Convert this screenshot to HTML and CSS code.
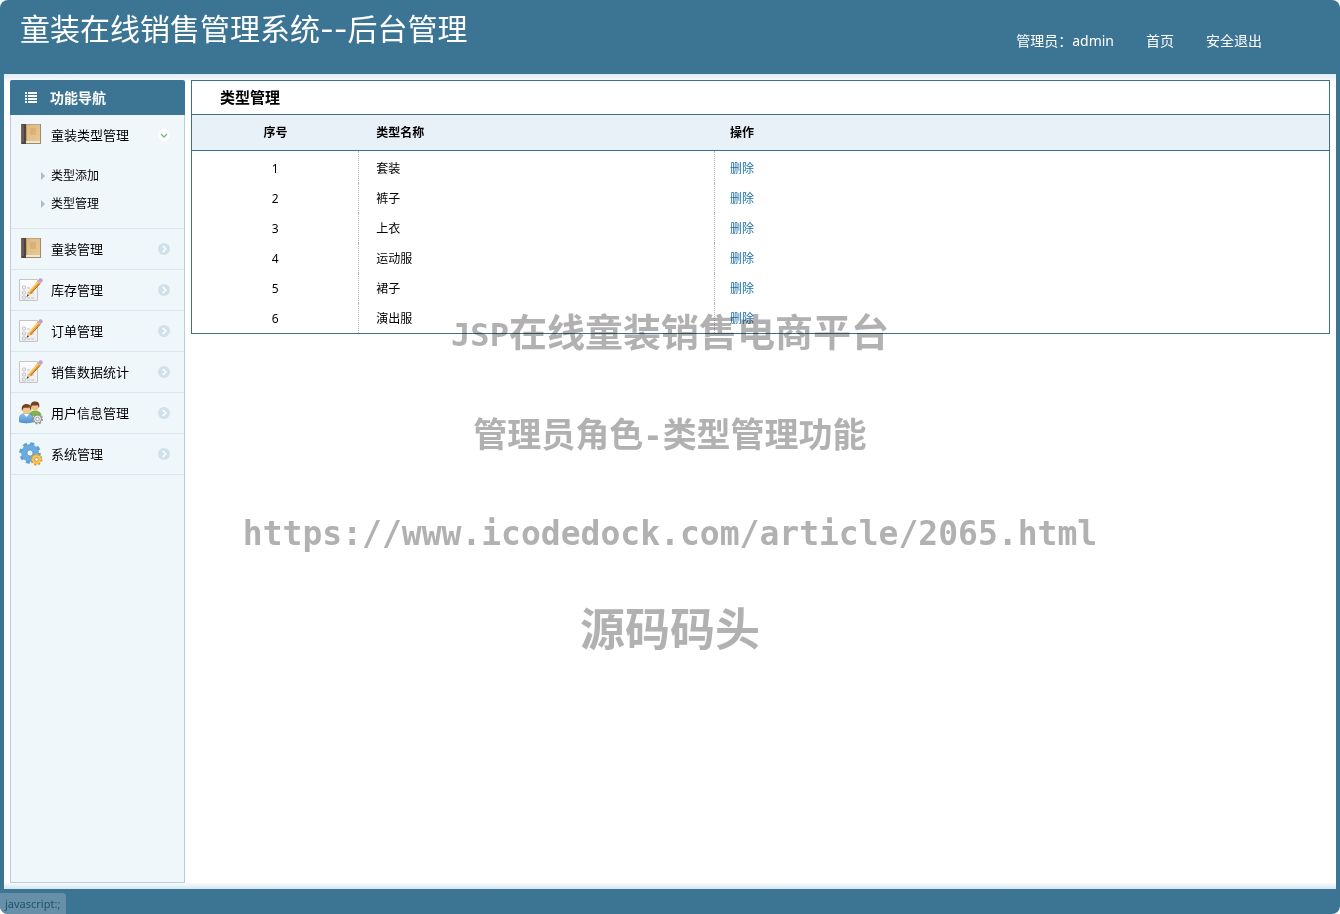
FILE: index.html
```html
<!DOCTYPE html>
<html lang="zh-CN">
<head>
<meta charset="utf-8">
<title>童装在线销售管理系统--后台管理</title>
<link rel="stylesheet" href="styles.css">
</head>
<body>
<svg class="defs" aria-hidden="true">
  <defs>
    <linearGradient id="cover" x1="0" y1="0" x2="1" y2="1"><stop offset="0" stop-color="#dcb982"/><stop offset="1" stop-color="#e7c891"/></linearGradient>
    <linearGradient id="blue" x1="0" y1="0" x2="0" y2="1"><stop offset="0" stop-color="#8fc4ee"/><stop offset="1" stop-color="#4a90d0"/></linearGradient>
    <linearGradient id="paper" x1="0" y1="0" x2="0" y2="1"><stop offset="0" stop-color="#fff"/><stop offset="1" stop-color="#ececec"/></linearGradient>
    <symbol id="book" viewBox="0 0 24 24">
      <path d="M2 1h20v20H2z" fill="#a08a6b"/>
      <path d="M7 1.500h14V18H7z" fill="url(#cover)"/>
      <path d="M11 5h6v7h-6z" fill="#cfa565" opacity=".5"/>
      <path d="M7 18h14v2H7z" fill="#efe6d3"/>
      <path d="M2.500 1H7v20H2.500z" fill="#51443d"/><path d="M3.500 2h1v17h-1z" fill="#81736a"/>
      <path d="M7 1.500h1V18H7z" fill="#c39d66"/>
    </symbol>
    <symbol id="form" viewBox="0 0 24 24">
      <path d="M.5 1.500h18v21H.5z" fill="url(#paper)" stroke="#c3c6c8"/>
      <g fill="none" stroke="#c2c2c2"><rect x="3.500" y="8" width="3" height="3" rx="1"/><rect x="3.500" y="13" width="3" height="3" rx="1"/><rect x="3.500" y="18" width="3" height="3" rx="1"/><path d="M8 15h8M8 20h8M8 10h3" stroke-dasharray="3 1"/></g>
      <path d="M19 2.500l2.500 2.500L11.500 16 8 18.500l1.500-4.500z" fill="#eb9c2c"/>
      <path d="M19 4L10 14" stroke="#ffd477" stroke-width="1.200"/>
      <path d="M21.300 5.300L11.500 16" stroke="#b8691e"/>
      <path d="M9.500 14l2 2L8 18.500z" fill="#edcf9d"/><path d="M8.700 16.300l1.200 1.200L7.500 19z" fill="#333"/>
      <path d="M18.500 3l2.800 2.800 1.200-1.300-2.800-2.800z" fill="#c5ccd3"/>
      <circle cx="21.600" cy="2.400" r="2.100" fill="#c79acb"/>
    </symbol>
    <symbol id="users" viewBox="0 0 24 24">
      <path d="M10 15c0-4 3-5.500 6-5.500s6.500 1.500 6.500 5.500z" fill="#83b63f"/>
      <circle cx="16" cy="5.500" r="3.800" fill="#f0bf86"/><path d="M11.500 7C11 2 13 .4 16 .4c4 0 5 2.600 4 6.600l-1.500-3c-2 .8-4 .5-5.200.5z" fill="#6d4224"/>
      <path d="M.5 21v-4c0-3 3-4.500 7-4.500s6.500 1.500 6.500 4.500v4q-6.500 2-13.500 0z" fill="url(#blue)" stroke="#3f86c8" stroke-width=".6"/>
      <path d="M5 13l2.500 3 2.500-3z" fill="#fff"/>
      <circle cx="7.500" cy="9" r="4" fill="#f3c48d"/><path d="M3 10C2 5 4 3 7.500 3c4 0 5.500 3 4.500 7l-1.500-3.500c-3 .5-4.500 0-6 .5z" fill="#79431f"/>
      <circle cx="18.500" cy="18" r="4" fill="#e6e6e6" stroke="#929292" stroke-width="1"/>
      <circle cx="18.500" cy="18" r="4.900" fill="none" stroke="#929292" stroke-width="1.400" stroke-dasharray="1.900 1.950"/>
      <circle cx="18.500" cy="18" r="1.700" fill="#fff" stroke="#929292" stroke-width=".8"/>
    </symbol>
    <symbol id="gears" viewBox="0 0 24 24">
      <circle cx="11" cy="11" r="6" fill="none" stroke="#68ace0" stroke-width="6"/>
      <circle cx="11" cy="11" r="9.500" fill="none" stroke="#5c9fd8" stroke-width="2.600" stroke-dasharray="4 3.460"/>
      <circle cx="11" cy="11" r="3" fill="#f0f7fb" stroke="#4788c4" stroke-width=".7"/>
      <circle cx="17.500" cy="17.500" r="3.400" fill="none" stroke="#f6c557" stroke-width="3"/>
      <circle cx="17.500" cy="17.500" r="5.200" fill="none" stroke="#dc962d" stroke-width="1.600" stroke-dasharray="2.100 1.980"/>
      <circle cx="17.500" cy="17.500" r="1.700" fill="#fff" stroke="#c9821e" stroke-width=".7"/>
    </symbol>
    <symbol id="next" viewBox="0 0 12 12"><circle cx="6" cy="6" r="6" fill="#cfe1ea"/><path d="M4.800 3l3 3-3 3" fill="none" stroke="#fff" stroke-width="1.700"/></symbol>
    <symbol id="open" viewBox="0 0 12 12"><circle cx="6" cy="6" r="6" fill="#fff"/><path d="M3 5l3 3 3-3" fill="none" stroke="#76b67c" stroke-width="1.300"/></symbol>
  </defs>
</svg>

<header class="top">
  <h1 class="brand">童装在线销售管理系统--后台管理</h1>
  <nav class="account">
    <span>管理员：admin</span>
    <a href="#">首页</a>
    <a href="#">安全退出</a>
  </nav>
</header>

<main class="workspace">
  <aside class="sidebar">
    <h2 class="side-title">
      <svg class="list-icon" viewBox="0 0 12 11" aria-hidden="true"><path d="M0 0h2v2H0zM3 0h9v2H3zM0 3h2v2H0zM3 3h9v2H3zM0 6h2v2H0zM3 6h9v2H3zM0 9h2v2H0zM3 9h9v2H3z" fill="#fff"/></svg>
      功能导航
    </h2>
    <ul class="menu">
      <li class="group">
        <button class="entry" type="button" aria-expanded="true"><svg class="pic"><use href="#book"/></svg><span class="name">童装类型管理</span><svg class="state"><use href="#open"/></svg></button>
        <ul class="submenu">
          <li><a class="sub" href="#">类型添加</a></li>
          <li><a class="sub" href="#">类型管理</a></li>
        </ul>
      </li>
      <li class="group"><button class="entry" type="button"><svg class="pic"><use href="#book"/></svg><span class="name">童装管理</span><svg class="state"><use href="#next"/></svg></button></li>
      <li class="group"><button class="entry" type="button"><svg class="pic"><use href="#form"/></svg><span class="name">库存管理</span><svg class="state"><use href="#next"/></svg></button></li>
      <li class="group"><button class="entry" type="button"><svg class="pic"><use href="#form"/></svg><span class="name">订单管理</span><svg class="state"><use href="#next"/></svg></button></li>
      <li class="group"><button class="entry" type="button"><svg class="pic"><use href="#form"/></svg><span class="name">销售数据统计</span><svg class="state"><use href="#next"/></svg></button></li>
      <li class="group"><button class="entry" type="button"><svg class="pic"><use href="#users"/></svg><span class="name">用户信息管理</span><svg class="state"><use href="#next"/></svg></button></li>
      <li class="group"><button class="entry" type="button"><svg class="pic"><use href="#gears"/></svg><span class="name">系统管理</span><svg class="state"><use href="#next"/></svg></button></li>
    </ul>
  </aside>

  <section class="panel">
    <h2 class="panel-title">类型管理</h2>
    <table class="types">
      <thead><tr><th class="no">序号</th><th class="type">类型名称</th><th class="action">操作</th></tr></thead>
      <tbody>
        <tr><td>1</td><td>套装</td><td><a href="#">删除</a></td></tr>
        <tr><td>2</td><td>裤子</td><td><a href="#">删除</a></td></tr>
        <tr><td>3</td><td>上衣</td><td><a href="#">删除</a></td></tr>
        <tr><td>4</td><td>运动服</td><td><a href="#">删除</a></td></tr>
        <tr><td>5</td><td>裙子</td><td><a href="#">删除</a></td></tr>
        <tr><td>6</td><td>演出服</td><td><a href="#">删除</a></td></tr>
      </tbody>
    </table>
  </section>
</main>

<footer class="bottom"><span class="status">javascript:;</span></footer>

<div class="watermark">
  <p class="mark platform"><span class="latin">JSP</span>在线童装销售电商平台</p>
  <p class="mark role">管理员角色<span class="latin">-</span>类型管理功能</p>
  <p class="mark address">https://www.icodedock.com/article/2065.html</p>
  <p class="mark site">源码码头</p>
</div>
</body>
</html>
```
FILE: styles.css
```css
* { box-sizing: border-box; }
html { background: #fff; }
body {
  position: relative;
  display: flex;
  flex-direction: column;
  min-height: 100vh;
  margin: 0;
  overflow: hidden;
  border-radius: 8px;
  background: #3c7593;
  color: #000;
  font: 12px/20px "Noto Sans", "Noto Sans CJK SC", sans-serif;
}
h1, h2, p, ul { margin: 0; padding: 0; }
ul { list-style: none; }
a { color: inherit; text-decoration: none; }
.defs { position: absolute; width: 0; height: 0; }

.top {
  display: flex;
  justify-content: space-between;
  height: 74px;
  padding: 0 78px 0 20px;
  color: #fff;
}
.brand {
  font: 400 30px/58px Inter, "Noto Sans CJK SC", sans-serif;
}
.account {
  display: flex;
  gap: 32px;
  padding-top: 31px;
  font-size: 14px;
}

.workspace {
  display: flex;
  flex: 1;
  gap: 6px;
  margin: 0 4px;
  padding: 6px;
  background:
    linear-gradient(#dfecf4, #fff) top / 100% 9px no-repeat,
    linear-gradient(#fff, #d3e7f0) bottom / 100% 7px no-repeat,
    #fff;
}

.sidebar {
  display: flex;
  flex-direction: column;
  flex: none;
  width: 175px;
}
.side-title {
  display: flex;
  align-items: center;
  gap: 13px;
  height: 35px;
  padding-left: 15px;
  border-radius: 2px 2px 0 0;
  background: #3c7593;
  color: #fff;
  font-size: 14px;
  font-weight: 700;
}
.list-icon { width: 12px; height: 11px; }
.menu {
  flex: 1;
  border: 1px solid #b8cfda;
  border-top: 0;
  background: #f0f7fb;
}
.group { border-bottom: 1px solid #d8e6ee; }
.entry {
  display: flex;
  align-items: center;
  width: 100%;
  height: 40px;
  padding: 0 14px 0 8px;
  border: 0;
  background: none;
  color: inherit;
  font: inherit;
  font-size: 13px;
  text-align: left;
  cursor: pointer;
}
.pic { width: 24px; height: 24px; margin-right: 8px; }
.name { flex: 1; }
.state { width: 12px; height: 12px; }
.submenu { padding: 7px 0 10px 30px; }
.sub {
  display: flex;
  align-items: center;
  gap: 6px;
  height: 28px;
}
.sub::before {
  content: "";
  border: 4px solid transparent;
  border-right: 0;
  border-left-color: #a7bfca;
}

.panel {
  flex: 1;
  align-self: flex-start;
  border: 1px solid #3f6f89;
}
.panel-title {
  height: 34px;
  padding-left: 28px;
  border-bottom: 1px solid #3f6f89;
  font-size: 15px;
  line-height: 33px;
}
.types {
  width: 100%;
  table-layout: fixed;
  border-collapse: separate;
  border-spacing: 0;
}
.no { width: 14.7%; }
.type { width: 31.3%; }
.types th {
  height: 36px;
  padding: 0 17px;
  border-bottom: 1px solid #3f6f89;
  background: #e8f0f8;
  text-align: left;
}
.types td { height: 30px; padding: 2px 17px 0; border-right: 1px dotted #b5b5b5; }
.types tr:first-child td { height: 32px; padding-top: 4px; }
.types th:first-child, .types td:first-child { text-align: center; }
.types th:last-child, .types td:last-child { padding-left: 15px; border-right: 0; }
.types a { color: #1b6fa8; }

.bottom { display: flex; align-items: flex-end; height: 25px; }
.status {
  height: 21px;
  padding: 1px 6px 0 5px;
  border-radius: 0 3px 0 0;
  background: #6790a8;
  color: #1f526d;
  font-size: 11px;
}

.watermark {
  position: absolute;
  inset: 305px 0 auto;
  display: flex;
  flex-direction: column;
  align-items: center;
  gap: 48px;
  color: #b1b1b1;
  font-family: "Noto Sans CJK SC", sans-serif;
  font-weight: 700;
  line-height: 50px;
  mix-blend-mode: multiply;
  pointer-events: none;
}
.mark { white-space: nowrap; }
.platform { font-size: 38px; }
.role { font-size: 34px; }
.site { font-size: 45px; line-height: 40px; }
.address { font-family: "DejaVu Sans Mono", monospace; font-size: 33px; }
.latin { font-family: "DejaVu Sans Mono", monospace; font-size: 32px; }
```
